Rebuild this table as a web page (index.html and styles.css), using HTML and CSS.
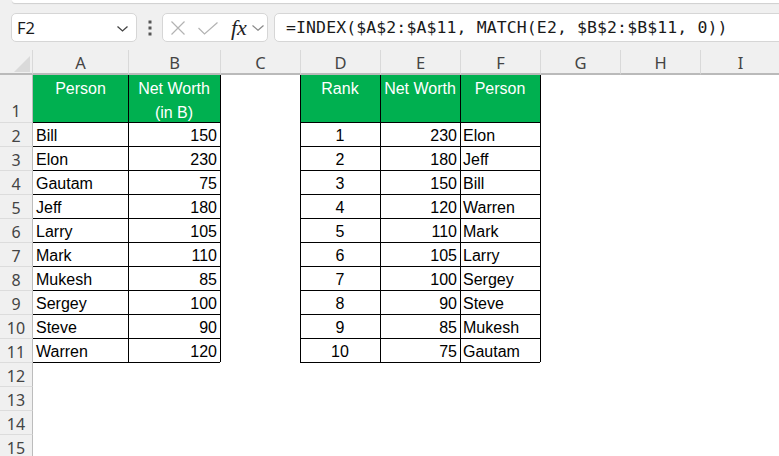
FILE: index.html
```html
<!DOCTYPE html>
<html>
<head>
<meta charset="utf-8">
<link rel="stylesheet" href="styles.css">
</head>
<body>
<div class="app">
  <div class="ribbon"></div>
  <div class="fbar">
    <div class="namebox">
      <span class="nb-text">F2</span>
      <svg class="chev" width="11" height="6" viewBox="0 0 11 6"><path d="M0.5 0.5 L5.5 5 L10.5 0.5" fill="none" stroke="#444" stroke-width="1.3"/></svg>
    </div>
    <div class="dots">
      <svg width="4" height="16" viewBox="0 0 4 16"><rect x="0.5" y="0.5" width="3" height="3" fill="#555"/><rect x="0.5" y="6.5" width="3" height="3" fill="#555"/><rect x="0.5" y="12.5" width="3" height="3" fill="#555"/></svg>
    </div>
    <div class="fxbox">
      <svg class="ico-x" width="14" height="14" viewBox="0 0 14 14"><path d="M0.5 0.5 L13.5 13.5 M13.5 0.5 L0.5 13.5" stroke="#b3b3b3" stroke-width="1.2" fill="none"/></svg>
      <svg class="ico-ok" width="20" height="13" viewBox="0 0 20 13"><path d="M0.5 6 L6.5 12 L19.5 0.5" stroke="#b3b3b3" stroke-width="1.2" fill="none"/></svg>
      <span class="fx">fx</span>
      <svg class="chev2" width="12" height="6" viewBox="0 0 12 6"><path d="M0.5 0.5 L6 5.3 L11.5 0.5" fill="none" stroke="#8a8a8a" stroke-width="1.2"/></svg>
    </div>
    <div class="formula">=INDEX($A$2:$A$11, MATCH(E2, $B$2:$B$11, 0))</div>
  </div>

  <div class="sheet">
    <div class="corner"><svg class="tri" width="16" height="16" viewBox="0 0 16 16"><path d="M16 0 L16 16 L0 16 Z" fill="#dadada"/></svg></div>
    <div class="ch">A</div><div class="ch">B</div><div class="ch">C</div><div class="ch">D</div><div class="ch">E</div><div class="ch">F</div><div class="ch">G</div><div class="ch">H</div><div class="ch">I</div>

    <div class="rh rh1">1</div>
    <div class="c g">Person</div>
    <div class="c g bl">Net Worth<br>(in B)</div>
    <div class="c bl"></div>
    <div class="c g bl">Rank</div>
    <div class="c g bl">Net Worth</div>
    <div class="c g bl">Person</div>
    <div class="c bl"></div><div class="c"></div><div class="c"></div>

    <div class="rh">2</div><div class="c bt">Bill</div><div class="c bt bl num">150</div><div class="c bl"></div><div class="c bt bl ctr">1</div><div class="c bt bl num">230</div><div class="c bt bl">Elon</div><div class="c bl"></div><div class="c"></div><div class="c"></div>
    <div class="rh">3</div><div class="c bt">Elon</div><div class="c bt bl num">230</div><div class="c bl"></div><div class="c bt bl ctr">2</div><div class="c bt bl num">180</div><div class="c bt bl">Jeff</div><div class="c bl"></div><div class="c"></div><div class="c"></div>
    <div class="rh">4</div><div class="c bt">Gautam</div><div class="c bt bl num">75</div><div class="c bl"></div><div class="c bt bl ctr">3</div><div class="c bt bl num">150</div><div class="c bt bl">Bill</div><div class="c bl"></div><div class="c"></div><div class="c"></div>
    <div class="rh">5</div><div class="c bt">Jeff</div><div class="c bt bl num">180</div><div class="c bl"></div><div class="c bt bl ctr">4</div><div class="c bt bl num">120</div><div class="c bt bl">Warren</div><div class="c bl"></div><div class="c"></div><div class="c"></div>
    <div class="rh">6</div><div class="c bt">Larry</div><div class="c bt bl num">105</div><div class="c bl"></div><div class="c bt bl ctr">5</div><div class="c bt bl num">110</div><div class="c bt bl">Mark</div><div class="c bl"></div><div class="c"></div><div class="c"></div>
    <div class="rh">7</div><div class="c bt">Mark</div><div class="c bt bl num">110</div><div class="c bl"></div><div class="c bt bl ctr">6</div><div class="c bt bl num">105</div><div class="c bt bl">Larry</div><div class="c bl"></div><div class="c"></div><div class="c"></div>
    <div class="rh">8</div><div class="c bt">Mukesh</div><div class="c bt bl num">85</div><div class="c bl"></div><div class="c bt bl ctr">7</div><div class="c bt bl num">100</div><div class="c bt bl">Sergey</div><div class="c bl"></div><div class="c"></div><div class="c"></div>
    <div class="rh">9</div><div class="c bt">Sergey</div><div class="c bt bl num">100</div><div class="c bl"></div><div class="c bt bl ctr">8</div><div class="c bt bl num">90</div><div class="c bt bl">Steve</div><div class="c bl"></div><div class="c"></div><div class="c"></div>
    <div class="rh">10</div><div class="c bt">Steve</div><div class="c bt bl num">90</div><div class="c bl"></div><div class="c bt bl ctr">9</div><div class="c bt bl num">85</div><div class="c bt bl">Mukesh</div><div class="c bl"></div><div class="c"></div><div class="c"></div>
    <div class="rh">11</div><div class="c bt">Warren</div><div class="c bt bl num">120</div><div class="c bl"></div><div class="c bt bl ctr">10</div><div class="c bt bl num">75</div><div class="c bt bl">Gautam</div><div class="c bl"></div><div class="c"></div><div class="c"></div>

    <div class="rh">12</div><div class="c bt"></div><div class="c bt"></div><div class="c"></div><div class="c bt"></div><div class="c bt"></div><div class="c bt"></div><div class="c"></div><div class="c"></div><div class="c"></div>
    <div class="rh">13</div><div class="c"></div><div class="c"></div><div class="c"></div><div class="c"></div><div class="c"></div><div class="c"></div><div class="c"></div><div class="c"></div><div class="c"></div>
    <div class="rh">14</div><div class="c"></div><div class="c"></div><div class="c"></div><div class="c"></div><div class="c"></div><div class="c"></div><div class="c"></div><div class="c"></div><div class="c"></div>
    <div class="rh">15</div><div class="c"></div><div class="c"></div><div class="c"></div><div class="c"></div><div class="c"></div><div class="c"></div><div class="c"></div><div class="c"></div><div class="c"></div>
  </div>
</div>
</body>
</html>
```

FILE: styles.css
```css
html, body {
  margin: 0;
  padding: 0;
}
body {
  width: 779px;
  height: 456px;
  overflow: hidden;
  background: #f0f0f0;
}
.app {
  width: 779px;
  height: 456px;
  overflow: hidden;
}
.ribbon {
  height: 3px;
  margin-left: 12px;
  background: #fff;
  border-bottom-left-radius: 6px;
  box-shadow: 0 1px 1px rgba(0, 0, 0, 0.14);
}
.fbar {
  display: flex;
  align-items: center;
  height: 29px;
  margin-top: 10px;
  margin-bottom: 8px;
}
.namebox {
  box-sizing: border-box;
  margin-left: 11px;
  width: 126px;
  height: 29px;
  background: #fff;
  border: 1px solid #d6d6d6;
  border-radius: 5px;
  display: flex;
  align-items: center;
  justify-content: space-between;
  padding: 0 8px 0 5px;
}
.nb-text {
  font-family: "Noto Sans", sans-serif;
  font-size: 16.5px;
  color: #1a1a1a;
  line-height: 27px;
}
.chev {
  margin-top: 2px;
}
.dots {
  width: 25px;
  display: flex;
  justify-content: center;
}
.fxbox {
  box-sizing: border-box;
  width: 106px;
  height: 29px;
  background: #fff;
  border: 1px solid #d6d6d6;
  border-radius: 5px;
  display: flex;
  align-items: center;
  padding-left: 8px;
}
.ico-ok {
  margin-left: 13px;
  margin-top: 1px;
}
.fx {
  margin-left: 13px;
  font-family: "Liberation Serif", serif;
  font-style: italic;
  font-size: 22px;
  color: #222;
  line-height: 27px;
}
.chev2 {
  margin-left: 5px;
  margin-top: 1px;
}
.formula {
  box-sizing: border-box;
  flex: 1;
  height: 29px;
  margin-left: 6px;
  margin-right: -10px;
  background: #fff;
  border: 1px solid #d6d6d6;
  border-radius: 5px;
  padding-left: 11px;
  font-family: "DejaVu Sans Mono", monospace;
  font-size: 16.5px;
  letter-spacing: 0.1px;
  line-height: 28px;
  color: #1a1a1a;
  white-space: nowrap;
}
.sheet {
  display: grid;
  grid-template-columns: 33px 95px 92px 80px 80px 80px 80px 80px 80px 80px;
  grid-template-rows: 25px 47px repeat(14, 24px);
  background: #fff;
  font-family: "Liberation Sans", Arial, sans-serif;
  font-size: 16px;
  color: #000;
}
.corner {
  position: relative;
  background: #f0f0f0;
  border-bottom: 2px solid #bababa;
  border-right: 1px solid #d9d9d9;
  box-sizing: border-box;
}
.tri {
  position: absolute;
  right: 2px;
  bottom: 1px;
}
.ch {
  box-sizing: border-box;
  background: #f0f0f0;
  border-left: 1px solid #d9d9d9;
  border-bottom: 2px solid #bababa;
  text-align: center;
  font-family: "Noto Sans", sans-serif;
  font-size: 16.5px;
  line-height: 24px;
  padding-top: 1px;
  color: #444;
}
.ch:nth-child(2) {
  border-left: none;
}
.rh {
  box-sizing: border-box;
  background: #f0f0f0;
  border-right: 1px solid #bcbcbc;
  border-top: 1px solid #dcdcdc;
  text-align: center;
  font-family: "Noto Sans", sans-serif;
  font-size: 16px;
  line-height: 24px;
  padding-top: 1px;
  color: #444;
}
.rh1 {
  border-top: none;
  padding-top: 24px;
}
.c {
  box-sizing: border-box;
  padding: 2px 3px 0 3px;
  line-height: 24px;
  white-space: nowrap;
  overflow: hidden;
}
.bt {
  border-top: 1px solid #000;
  padding-top: 1px;
}
.bl {
  border-left: 1px solid #000;
  padding-left: 2px;
}
.g {
  background: #00b050;
  color: #fff;
  text-align: center;
}
.num {
  text-align: right;
}
.ctr {
  text-align: center;
}
```
